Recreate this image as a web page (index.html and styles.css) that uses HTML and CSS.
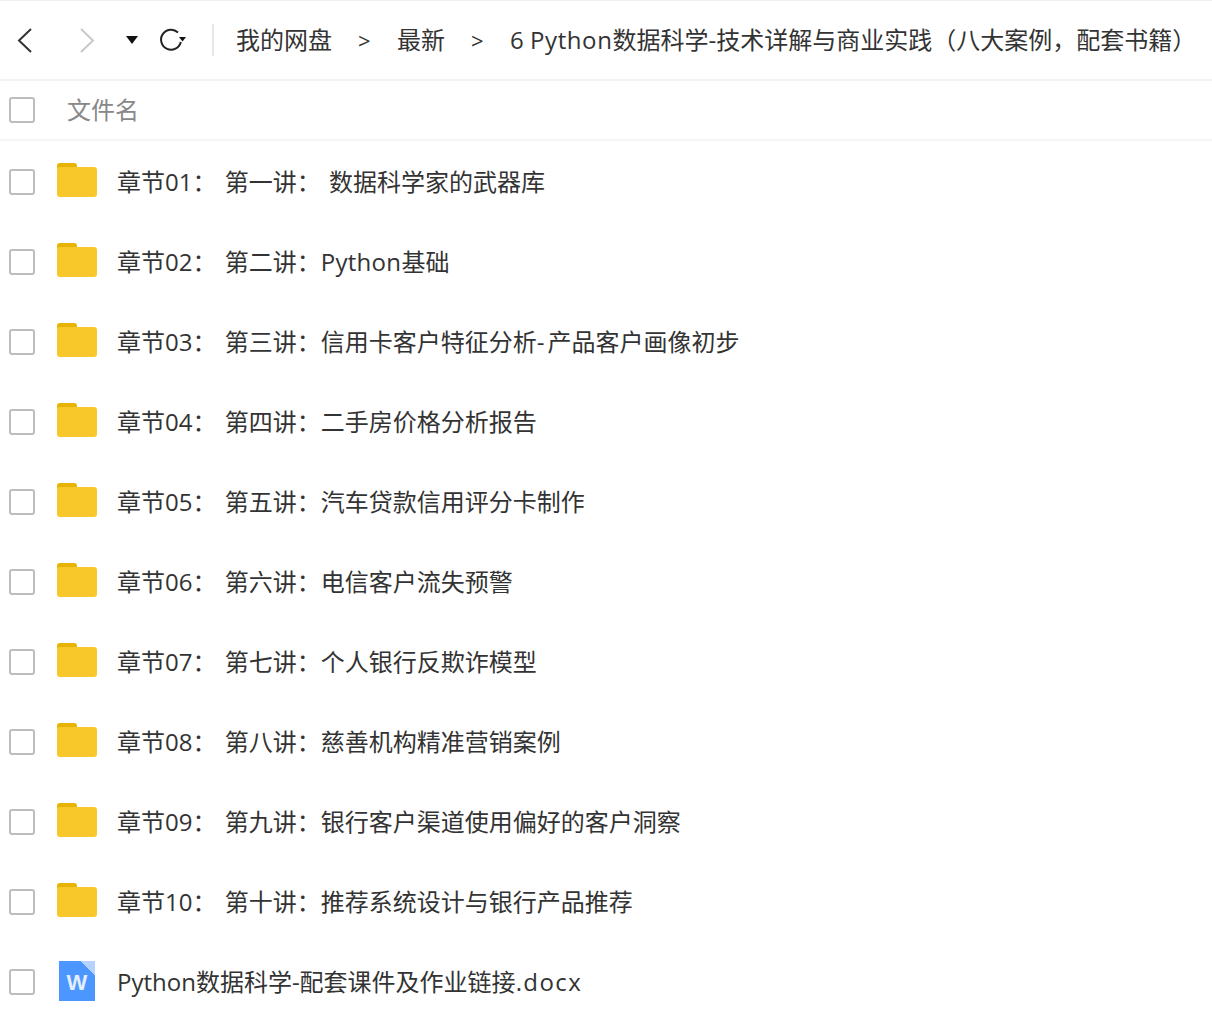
FILE: index.html
```html
<!DOCTYPE html>
<html lang="zh-CN">
<head>
<meta charset="utf-8">
<title>我的网盘</title>
<link rel="stylesheet" href="styles.css">
</head>
<body>
<svg class="defs" width="0" height="0">
  <symbol id="folder" viewBox="0 0 40 34">
    <path d="M0 3a3 3 0 0 1 3-3h14a3 3 0 0 1 3 3v2H0z" fill="#e6b400"/>
    <path d="M0 6a2 2 0 0 1 2-2h15l3 0h17a3 3 0 0 1 3 3v24a3 3 0 0 1-3 3H3a3 3 0 0 1-3-3z" fill="#f8c82b"/>
  </symbol>
</svg>
<header class="toolbar">
  <svg class="ico back" width="18" height="26" viewBox="0 0 18 26"><path d="M15 2 3 13.500 15 25" fill="none" stroke="#333" stroke-width="2"/></svg>
  <svg class="ico forward" width="18" height="26" viewBox="0 0 18 26"><path d="M3 2 15 13.500 3 25" fill="none" stroke="#c8c8c8" stroke-width="2"/></svg>
  <svg class="ico caret" width="12" height="8" viewBox="0 0 12 8"><path d="M0 0h12L6 8z" fill="#111"/></svg>
  <svg class="ico refresh" width="28" height="24" viewBox="0 0 28 24"><path d="M19 4.500A10 10 0 1 0 21.800 14" fill="none" stroke="#222" stroke-width="2"/><path d="M20 9h7l-3.500 4.500z" fill="#111"/></svg>
  <span class="divider"></span>
  <nav class="crumbs">
    <span class="crumb">我的网盘</span><span class="sep">&gt;</span>
    <span class="crumb">最新</span><span class="sep">&gt;</span>
    <span class="crumb">6 <span class="latin-wide">Python</span>数据科学-技术详解与商业实践（八大案例，配套书籍）</span>
  </nav>
</header>
<div class="head-row">
  <span class="check"></span>
  <span class="head-label">文件名</span>
</div>
<main class="list">
  <div class="row"><span class="check"></span><svg class="folder"><use href="#folder"/></svg><span class="name">章节01： 第一讲： 数据科学家的武器库</span></div>
  <div class="row"><span class="check"></span><svg class="folder"><use href="#folder"/></svg><span class="name">章节02： 第二讲：<span class="latin">Python</span>基础</span></div>
  <div class="row"><span class="check"></span><svg class="folder"><use href="#folder"/></svg><span class="name">章节03： 第三讲：信用卡客户特征分析<span class="hyphen">-</span>产品客户画像初步</span></div>
  <div class="row"><span class="check"></span><svg class="folder"><use href="#folder"/></svg><span class="name">章节04： 第四讲：二手房价格分析报告</span></div>
  <div class="row"><span class="check"></span><svg class="folder"><use href="#folder"/></svg><span class="name">章节05： 第五讲：汽车贷款信用评分卡制作</span></div>
  <div class="row"><span class="check"></span><svg class="folder"><use href="#folder"/></svg><span class="name">章节06： 第六讲：电信客户流失预警</span></div>
  <div class="row"><span class="check"></span><svg class="folder"><use href="#folder"/></svg><span class="name">章节07： 第七讲：个人银行反欺诈模型</span></div>
  <div class="row"><span class="check"></span><svg class="folder"><use href="#folder"/></svg><span class="name">章节08： 第八讲：慈善机构精准营销案例</span></div>
  <div class="row"><span class="check"></span><svg class="folder"><use href="#folder"/></svg><span class="name">章节09： 第九讲：银行客户渠道使用偏好的客户洞察</span></div>
  <div class="row"><span class="check"></span><svg class="folder"><use href="#folder"/></svg><span class="name">章节10： 第十讲：推荐系统设计与银行产品推荐</span></div>
  <div class="row"><span class="check"></span>
    <span class="doc"><span class="doc-letter">W</span></span>
    <span class="name">Python数据科学-配套课件及作业链接<span class="ext">.docx</span></span>
  </div>
</main>
</body>
</html>
```
FILE: styles.css
```css
* { box-sizing: border-box; }
html, body { margin: 0; padding: 0; background: #fff; }
body {
  width: 1212px;
  height: 1025px;
  overflow: hidden;
  font-family: "Open Sans", "Noto Sans CJK SC", sans-serif;
  font-size: 24px;
  color: #333;
  border-top: 1px solid #f0f0f0;
}
.defs { position: absolute; }
.toolbar {
  display: flex;
  align-items: center;
  height: 80px;
  border-bottom: 2px solid #f2f2f2;
  padding-left: 16px;
}
.ico { flex: none; display: block; }
.forward { margin-left: 44px; }
.caret { margin-left: 30px; }
.refresh { margin-left: 21px; }
.divider {
  flex: none;
  width: 2px;
  height: 32px;
  margin-left: 25px;
  background: #e8e8e8;
}
.crumbs {
  display: flex;
  align-items: center;
  margin-left: 22px;
  white-space: nowrap;
  line-height: 32px;
}
.sep { width: 15px; margin: 0 24px 0 26px; font-size: 22px; }
.latin-wide { letter-spacing: 0.6px; }
.latin { letter-spacing: 0.3px; }
.ext { letter-spacing: 1.4px; }
.hyphen { letter-spacing: 3px; }
.head-row {
  display: flex;
  align-items: center;
  height: 60px;
  border-bottom: 2px solid #f5f5f5;
  padding-left: 9px;
}
.head-label { margin-left: 32px; padding-bottom: 4px; color: #888; }
.list { padding-top: 1px; }
.check {
  flex: none;
  width: 26px;
  height: 26px;
  border: 2px solid #bdbdbd;
  border-radius: 3px;
}
.row {
  display: flex;
  align-items: center;
  height: 80px;
  padding-left: 9px;
}
.folder {
  flex: none;
  width: 40px;
  height: 34px;
  margin-left: 22px;
  position: relative;
  top: -2px;
}
.name {
  margin-left: 20px;
  white-space: nowrap;
  line-height: 32px;
  word-spacing: 2px;
}
.doc {
  flex: none;
  width: 36px;
  height: 40px;
  margin-left: 24px;
  margin-right: 2px;
  position: relative;
  top: -1px;
  background: linear-gradient(225deg, #b4d3ff 0 10px, #4c96ff 10px);
  display: flex;
  align-items: center;
  justify-content: center;
  padding-top: 4px;
}
.doc-letter {
  font-family: "Liberation Sans", sans-serif;
  font-weight: 700;
  font-size: 22px;
  color: #e3eeff;
  line-height: 1;
}
```
